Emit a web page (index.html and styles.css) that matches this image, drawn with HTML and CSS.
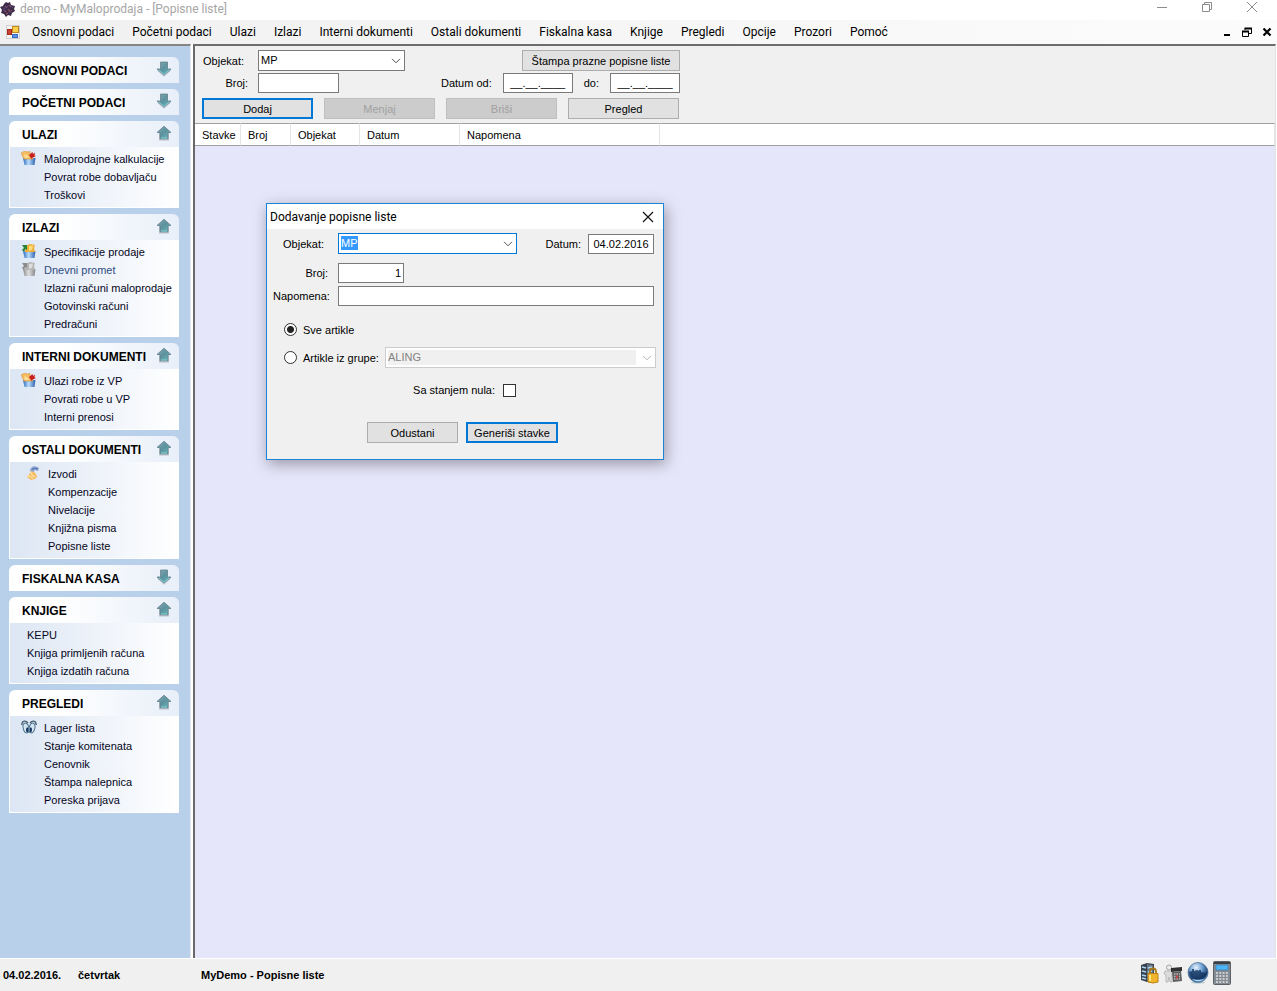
FILE: index.html
```html
<!DOCTYPE html>
<html lang="sr-Latn">
<head>
<meta charset="utf-8">
<title>demo - MyMaloprodaja - [Popisne liste]</title>
<link rel="stylesheet" href="styles.css">
</head>
<body>
<svg class="defs" width="0" height="0" aria-hidden="true">
  <defs>
    <linearGradient id="teal" x1="0" y1="0" x2="1" y2="1"><stop offset="0" stop-color="#87aab6"/><stop offset=".5" stop-color="#5b929d"/><stop offset="1" stop-color="#6fc0c4"/></linearGradient>
    <linearGradient id="cup" x1="0" y1="0" x2="1" y2="0"><stop offset="0" stop-color="#2c6cc0"/><stop offset=".45" stop-color="#b9dcf8"/><stop offset="1" stop-color="#2b60ae"/></linearGradient>
    <linearGradient id="cupgray" x1="0" y1="0" x2="1" y2="0"><stop offset="0" stop-color="#8c8c8c"/><stop offset=".45" stop-color="#dedede"/><stop offset="1" stop-color="#858585"/></linearGradient>
    <radialGradient id="globe" cx=".4" cy=".25" r=".8"><stop offset="0" stop-color="#e9f3fc"/><stop offset=".4" stop-color="#6fa0d2"/><stop offset=".75" stop-color="#1c4272"/><stop offset="1" stop-color="#7eb6e8"/></radialGradient>
    <symbol id="up" viewBox="0 0 16 16"><path d="M3 8v7.500h10V8" fill="#8b949c" opacity=".5"/><path d="M8 1.200 15 7.500H12V13.800H4V7.500H1Z" fill="url(#teal)" stroke="#64808c" stroke-width=".8"/><path d="M5 13h6" stroke="#80d0d4"/></symbol>
    <symbol id="down" viewBox="0 0 16 16"><path d="M1 9.500 8 15.800l7-6.300" fill="#8b949c" opacity=".5"/><path d="M4.500 1h7V8H15L8 14 1 8H4.500Z" fill="url(#teal)" stroke="#64808c" stroke-width=".8"/><path d="M3 9l5 4.300L13 9" fill="none" stroke="#80d0d4"/></symbol>
    <symbol id="in" viewBox="0 0 16 15"><path d="M2 7h12.500l-1 7H3.500Z" fill="url(#cup)"/><path d="M0 2 4 0l2 1 3-.5V4l3 4H3Z" fill="#f5bd62" stroke="#dc963a" stroke-width=".6"/><path d="M3 3.500l3 .5 2 3H4Z" fill="#fbe09a"/><path d="M8 4l3.500-3 .5 2 2-1.500-.5 3L15 5l-4 2-.5 1Z" fill="#c81e1c"/></symbol>
    <symbol id="out" viewBox="0 0 16 15"><path d="M2 7h12.500l-1 7H3.500Z" fill="url(#cup)"/><path d="M5 1.500 9 0l5 1-1 3 1 4H4Z" fill="#f2ad36"/><path d="M8 2l4-.5L11 6 8 7Z" fill="#fbe07a"/><path d="M1 1h5v5L4.500 5 3 7.500.8 6 3 4Z" fill="#23863a"/></symbol>
    <symbol id="outgray" viewBox="0 0 16 15"><path d="M2 7h12.500l-1 7H3.500Z" fill="url(#cupgray)"/><path d="M5 1.500 9 0l5 1-1 3 1 4H4Z" fill="#b4b4b4"/><path d="M8 2l4-.5L11 6 8 7Z" fill="#dcdcdc"/><path d="M1 1h5v5L4.500 5 3 7.500.8 6 3 4Z" fill="#8a8a8a"/></symbol>
    <symbol id="hand" viewBox="0 0 14 15"><path d="M4 5C4 1 8-1 11 1l2 1-1 3-3-1-2 3Z" fill="#8da6d2"/><path d="M6 3.500C8 2 10 2 12 3" stroke="#5878b6" stroke-width="1.200" fill="none"/><path d="M5 5 8 6l2 2 1 3-2 2-4 1-4-3 2-2Z" fill="#f7bb62"/><path d="M1 10l3 .5 3 1.500M5 6l1 3 3 2" stroke="#fde3a8" stroke-width="1.200" fill="none"/></symbol>
    <symbol id="eyes" viewBox="0 0 16 15"><path d="M.7 5C1 0 5 .5 7 3M15.300 5C15 0 11 .5 9 3" fill="none" stroke="#475d70" stroke-width="1.300"/><ellipse cx="5" cy="8" rx="2.800" ry="5" transform="rotate(-14 5 8)" fill="#d4e6f0" stroke="#496d8a"/><ellipse cx="11" cy="8" rx="2.800" ry="5" transform="rotate(14 11 8)" fill="#d4e6f0" stroke="#496d8a"/><ellipse cx="6.200" cy="9.800" rx="1.200" ry="2.500" fill="#16375f"/><ellipse cx="9.800" cy="9.800" rx="1.200" ry="2.500" fill="#16375f"/></symbol>
  </defs>
</svg>
<div class="window">
  <header class="titlebar">
    <svg width="16" height="17" viewBox="0 0 16 17"><path d="M6 1l2 1 2-1 1 3 4 1-1 3 1 2-3 2-1 3-3-1-2 2-2-3-3-1 1-3-2-3 3-1 1-2Z" fill="#3c2a48"/><path d="M5 5l2 2M9 4l2 2M4 9l2 2M8 8l2 3M11 9l1 1M6 13l2-1" stroke="#7c5060" stroke-width="1.500"/><path d="M7 5l1 1M3 8l2-1M10 12l1-1M12 6l1 1" stroke="#4b4479" stroke-width="1.500"/></svg>
    <h1 class="caption">demo - MyMaloprodaja - [Popisne liste]</h1>
    <div class="syscontrols">
      <button class="glyph" aria-label="Minimize"><svg width="12" height="12" viewBox="0 0 12 12"><path d="M1 6.500h10" stroke="#8c8c8c"/></svg></button>
      <button class="glyph" aria-label="Restore"><svg width="12" height="12" viewBox="0 0 12 12"><path d="M1.500 3.500h7v7h-7ZM3.500 3.500v-2h7v7h-2" fill="none" stroke="#8c8c8c"/></svg></button>
      <button class="glyph" aria-label="Close"><svg width="12" height="12" viewBox="0 0 12 12"><path d="M1 1l10 10M11 1 1 11" stroke="#8c8c8c"/></svg></button>
    </div>
  </header>
  <nav class="menubar">
    <svg class="appicon" width="14" height="14" viewBox="0 0 14 14"><rect x=".5" y=".5" width="13" height="13" fill="#f4f4f4" stroke="#d0d0d0"/><rect x="6.500" y="1.500" width="6" height="6" fill="#fbcf47" stroke="#bd8b24"/><rect x="1.500" y="4.500" width="4" height="5" fill="#cf4034" stroke="#a52a20"/><rect x="6.500" y="9.500" width="5" height="3" fill="#5b92ec" stroke="#3a6bbf"/></svg>
    <button class="menuitem">Osnovni podaci</button>
    <button class="menuitem">Početni podaci</button>
    <button class="menuitem">Ulazi</button>
    <button class="menuitem">Izlazi</button>
    <button class="menuitem">Interni dokumenti</button>
    <button class="menuitem">Ostali dokumenti</button>
    <button class="menuitem">Fiskalna kasa</button>
    <button class="menuitem">Knjige</button>
    <button class="menuitem">Pregledi</button>
    <button class="menuitem">Opcije</button>
    <button class="menuitem">Prozori</button>
    <button class="menuitem">Pomoć</button>
    <div class="childcontrols">
      <button class="glyph" aria-label="Minimize child"><svg width="10" height="10" viewBox="0 0 10 10"><path d="M2 8h6" stroke="#000" stroke-width="2"/></svg></button>
      <button class="glyph" aria-label="Restore child"><svg width="10" height="10" viewBox="0 0 10 10"><path d="M.5 4v5.500h6V4M3 3V1.500h6.500V6.500H7" fill="none" stroke="#000"/><path d="M0 4.500h7M2.500 1.500h7.500" stroke="#000" stroke-width="2"/></svg></button>
      <button class="glyph" aria-label="Close child"><svg width="10" height="10" viewBox="0 0 10 10"><path d="M1.500 1.500l7 7M8.500 1.500l-7 7" stroke="#000" stroke-width="2.200"/></svg></button>
    </div>
  </nav>
  <div class="workspace">
    <aside class="sidebar">
      <section class="group"><h2 class="grouphead">OSNOVNI PODACI<svg class="arrow"><use href="#down"/></svg></h2></section>
      <section class="group"><h2 class="grouphead">POČETNI PODACI<svg class="arrow"><use href="#down"/></svg></h2></section>
      <section class="group"><h2 class="grouphead">ULAZI<svg class="arrow"><use href="#up"/></svg></h2>
        <ul class="links">
          <li class="item"><svg class="icon"><use href="#in"/></svg><a href="#">Maloprodajne kalkulacije</a></li>
          <li class="item"><a href="#">Povrat robe dobavljaču</a></li>
          <li class="item"><a href="#">Troškovi</a></li>
        </ul></section>
      <section class="group"><h2 class="grouphead">IZLAZI<svg class="arrow"><use href="#up"/></svg></h2>
        <ul class="links">
          <li class="item"><svg class="icon"><use href="#out"/></svg><a href="#">Specifikacije prodaje</a></li>
          <li class="item muted"><svg class="icon"><use href="#outgray"/></svg><a href="#">Dnevni promet</a></li>
          <li class="item"><a href="#">Izlazni računi maloprodaje</a></li>
          <li class="item"><a href="#">Gotovinski računi</a></li>
          <li class="item"><a href="#">Predračuni</a></li>
        </ul></section>
      <section class="group"><h2 class="grouphead">INTERNI DOKUMENTI<svg class="arrow"><use href="#up"/></svg></h2>
        <ul class="links">
          <li class="item"><svg class="icon"><use href="#in"/></svg><a href="#">Ulazi robe iz VP</a></li>
          <li class="item"><a href="#">Povrati robe u VP</a></li>
          <li class="item"><a href="#">Interni prenosi</a></li>
        </ul></section>
      <section class="group"><h2 class="grouphead">OSTALI DOKUMENTI<svg class="arrow"><use href="#up"/></svg></h2>
        <ul class="links deep">
          <li class="item"><svg class="icon"><use href="#hand"/></svg><a href="#">Izvodi</a></li>
          <li class="item"><a href="#">Kompenzacije</a></li>
          <li class="item"><a href="#">Nivelacije</a></li>
          <li class="item"><a href="#">Knjižna pisma</a></li>
          <li class="item"><a href="#">Popisne liste</a></li>
        </ul></section>
      <section class="group"><h2 class="grouphead">FISKALNA KASA<svg class="arrow"><use href="#down"/></svg></h2></section>
      <section class="group"><h2 class="grouphead">KNJIGE<svg class="arrow"><use href="#up"/></svg></h2>
        <ul class="links shallow">
          <li class="item"><a href="#">KEPU</a></li>
          <li class="item"><a href="#">Knjiga primljenih računa</a></li>
          <li class="item"><a href="#">Knjiga izdatih računa</a></li>
        </ul></section>
      <section class="group"><h2 class="grouphead">PREGLEDI<svg class="arrow"><use href="#up"/></svg></h2>
        <ul class="links">
          <li class="item"><svg class="icon"><use href="#eyes"/></svg><a href="#">Lager lista</a></li>
          <li class="item"><a href="#">Stanje komitenata</a></li>
          <li class="item"><a href="#">Cenovnik</a></li>
          <li class="item"><a href="#">Štampa nalepnica</a></li>
          <li class="item"><a href="#">Poreska prijava</a></li>
        </ul></section>
    </aside>
    <main class="main">
      <form class="toolbar">
        <div class="row">
          <label class="label inset" for="f-obj">Objekat:</label>
          <span class="combo wide"><select id="f-obj" class="field"><option>MP</option></select><svg class="chevron" viewBox="0 0 10 6"><path d="M1 .8l4 4 4-4"/></svg></span>
          <button type="button" class="btn print">Štampa prazne popisne liste</button>
        </div>
        <div class="row second">
          <label class="label" for="f-broj">Broj:</label>
          <input id="f-broj" class="field short" type="text">
          <div class="dates">
            <label for="f-od">Datum od:</label><input id="f-od" class="field date" type="text" value="__.__.____">
            <label for="f-do">do:</label><input id="f-do" class="field date" type="text" value="__.__.____">
          </div>
        </div>
        <div class="actions">
          <button type="button" class="btn primary">Dodaj</button>
          <button type="button" class="btn" disabled>Menjaj</button>
          <button type="button" class="btn" disabled>Briši</button>
          <button type="button" class="btn">Pregled</button>
        </div>
      </form>
      <table class="grid">
        <colgroup><col class="c1"><col class="c2"><col class="c3"><col class="c4"><col class="c5"><col></colgroup>
        <thead><tr><th>Stavke</th><th>Broj</th><th>Objekat</th><th>Datum</th><th>Napomena</th><th></th></tr></thead>
      </table>
      <section class="dialog" role="dialog" aria-labelledby="dlg-title">
        <header class="dlghead"><h2 id="dlg-title" class="dlgtitle">Dodavanje popisne liste</h2>
          <button class="glyph" aria-label="Zatvori"><svg width="12" height="12" viewBox="0 0 12 12"><path d="M1 1l10 10M11 1 1 11" stroke="#111" stroke-width="1.200"/></svg></button></header>
        <form class="dlgbody">
          <div class="row">
            <label class="label inset" for="d-obj">Objekat:</label>
            <span class="combo focus"><select id="d-obj" class="field"><option>MP</option></select><svg class="chevron" viewBox="0 0 10 6"><path d="M1 .8l4 4 4-4"/></svg></span>
            <label class="datelabel" for="d-dat">Datum:</label><input id="d-dat" class="field day" type="text" value="04.02.2016">
          </div>
          <div class="row spaced"><label class="label" for="d-broj">Broj:</label><input id="d-broj" class="field day number" type="text" value="1"></div>
          <div class="row tight"><label class="label" for="d-nap">Napomena:</label><input id="d-nap" class="field grow" type="text"></div>
          <div class="choice first"><input id="r-sve" type="radio" name="izbor" class="radio" checked><label for="r-sve">Sve artikle</label></div>
          <div class="choice"><input id="r-grp" type="radio" name="izbor" class="radio"><label for="r-grp">Artikle iz grupe:</label>
            <span class="combo off"><select class="field" aria-label="Grupa" disabled><option>ALING</option></select><svg class="chevron" viewBox="0 0 10 6"><path d="M1 .8l4 4 4-4"/></svg></span></div>
          <div class="zero"><label for="c-nula">Sa stanjem nula:</label><input id="c-nula" type="checkbox" class="check"></div>
          <div class="dlgactions"><button type="button" class="btn">Odustani</button><button type="button" class="btn primary">Generiši stavke</button></div>
        </form>
      </section>
    </main>
  </div>
  <footer class="status">
    <span class="today">04.02.2016.</span><span class="weekday">četvrtak</span><span>MyDemo - Popisne liste</span>
    <div class="tray">
      <svg width="20" height="22" viewBox="0 0 20 22"><path d="M2 3 8 1l7 1v16l-7 2-6-2Z" fill="#38424e"/><path d="M8 2l6 1v15l-6 1Z" fill="#687584"/><path d="M3 5l4 1M3 9l4 1M3 13l4 1M3 16l4 1M9 6l4-1M9 10l4-1M9 14l3-1" stroke="#a8d3f1" stroke-width="1.800"/><path d="M11 12V9.500c0-4 6-4 6 0V12" fill="none" stroke="#a77913" stroke-width="1.800"/><path d="M9 11.500h10V20l-5 1-5-1Z" fill="#f0b52a" stroke="#ba8013"/><path d="M11 13v6" stroke="#ffe27b" stroke-width="2"/></svg>
      <svg width="20" height="22" viewBox="0 0 20 22"><circle cx="6" cy="5.500" r="2.500" fill="#ececec" stroke="#a4a4a4"/><path d="M2 9h7v11H7l-1-5-1 5H3v-7l-2-1Z" fill="#dcdcdc" stroke="#aaa" stroke-width=".7"/><path d="M8 6l11-1v4l-11 1Z" fill="#303030"/><path d="M9 10l9-1 1 10-9 1Z" fill="#5e5e5e"/><path d="M11 12h6M11 14.500h6M11 17h6" stroke="#bdbdbd" stroke-dasharray="1.500 1" stroke-width="1.300"/><path d="M13 13.500h2v3h-2Z" fill="#c44"/></svg>
      <svg width="22" height="22" viewBox="0 0 22 22"><ellipse cx="11" cy="20.500" rx="7" ry="1" fill="#bcc"/><circle cx="11" cy="10.500" r="10" fill="url(#globe)" stroke="#45678e" stroke-width=".7"/><path d="M2 10l3-1V7h2v2l3-1 2 1V8h2v2l6 1c-1 4-4 7-8 7C7 18 3 15 2 10Z" fill="#14335c" opacity=".8"/><path d="M5 17c4 3 8 3 12 0-3 1-9 1-12 0Z" fill="#b5e1ff"/></svg>
      <svg width="18" height="24" viewBox="0 0 18 24"><rect x=".5" y=".5" width="17" height="23" rx="1" fill="#858b92" stroke="#5b6066"/><path d="M1 2h16" stroke="#3a3f45" stroke-width="2"/><rect x="3" y="4" width="12" height="5" fill="#4db4f3" stroke="#2d78b1" stroke-width=".6"/><path d="M3 12h12M3 15h12M3 18h12M3 21h12" stroke="#e1e3e5" stroke-width="1.700" stroke-dasharray="2 1.300"/></svg>
    </div>
  </footer>
</div>
</body>
</html>
```

FILE: styles.css
```css
* { box-sizing: border-box; }
body { margin: 0; font: 11px/14px "Liberation Sans", Arial, sans-serif; color: #000; background: #fff; }
button, input, select { font: inherit; color: inherit; margin: 0; border-radius: 0; }
h1, h2, ul { margin: 0; padding: 0; font: inherit; list-style: none; }
svg { display: block; flex: none; }
.defs { position: absolute; }
.window { display: flex; flex-direction: column; height: 100vh; }

.titlebar { display: flex; align-items: center; flex: none; height: 20px; padding: 0 19px 2px 0; background: #fff; }
.caption, .menuitem, .dlgtitle { font: 12px/16px Roboto, "Noto Sans", sans-serif; }
.caption { margin-left: 4px; color: #a6a6a6; }
.syscontrols { display: flex; gap: 33px; margin-left: auto; padding-bottom: 4px; }
.glyph { display: block; padding: 0; border: 0; background: none; }
.menubar { display: flex; align-items: center; flex: none; height: 24px; padding: 0 5px 0 6px; background: linear-gradient(90deg, #f0f0f0, #fcfcfc); }
.appicon { margin-right: 12px; }
.menuitem { padding: 0; margin-right: 18px; border: 0; background: none; white-space: nowrap; }
.childcontrols { display: flex; gap: 10px; margin-left: auto; }

.workspace { display: flex; flex: 1; min-height: 0; margin-right: 1px; }
.sidebar { flex: none; display: flex; flex-direction: column; gap: 6px; width: 191px; padding: 11px 11px 0 9px; background: #b9d0ea; border-top: 2px solid #858585; border-right: 1px solid #e8e8e8; }
.grouphead { display: flex; align-items: center; justify-content: space-between; height: 26px; padding: 1px 7px 0 13px; border-radius: 6px 6px 0 0; background: linear-gradient(90deg, #fff 30%, #e8eff9); font-size: 12px; font-weight: bold; white-space: nowrap; }
.arrow { width: 16px; height: 16px; margin-bottom: 4px; }
.links { padding: 3px 0 3px 34px; border: 1px solid #fff; border-width: 0 0 1px 1px; background: linear-gradient(90deg, #dce6f4, #fff); }
.deep { padding-left: 38px; }
.shallow { padding-left: 17px; }
.item { position: relative; height: 18px; line-height: 18px; white-space: nowrap; }
.item a { color: #05051c; text-decoration: none; }
.muted a { color: #2f4c80; }
.icon { position: absolute; left: -23px; top: 1px; width: 16px; height: 15px; }

.main { position: relative; flex: 1; min-width: 0; margin-left: 2px; background: #e6e6fa; border-top: 2px solid #6d6d6d; border-left: 2px solid #696969; border-right: 1px solid #e3e3e3; }
.toolbar { padding: 4px 7px; height: 77px; background: #f0f0f0; }
.row { display: flex; align-items: center; width: 478px; }
.label { width: 46px; margin-right: 10px; text-align: right; white-space: nowrap; }
.inset { padding-right: 4px; }
.field { display: block; height: 20px; padding: 0 2px; border: 1px solid #7a7a7a; background-color: #fff; outline: 0; }
.combo { position: relative; display: block; }
.combo .field { appearance: none; width: 100%; height: 21px; padding: 0 20px 2px 2px; opacity: 1; }
.chevron { position: absolute; right: 4px; top: 8px; width: 10px; height: 6px; fill: none; stroke: #555; pointer-events: none; }
.wide { width: 147px; }
.btn { height: 21px; padding: 0 4px; border: 1px solid #adadad; background: #e1e1e1; white-space: nowrap; }
.btn:disabled { border-color: #bfbfbf; background: #ccc; color: #a0a0a0; }
.primary { border: 2px solid #0078d7; }
.print { width: 158px; margin-left: auto; }
.second { margin-top: 2px; }
.short { width: 81px; }
.dates { display: flex; align-items: center; gap: 11px; margin-left: auto; }
.date { width: 70px; text-align: center; }
.actions { display: grid; grid-template-columns: repeat(4, 111px); gap: 11px; margin-top: 5px; }

.grid { width: 100%; table-layout: fixed; border-collapse: separate; border-spacing: 0; background: #fff; }
.grid th { height: 23px; padding: 0 0 0 7px; border: solid #a0a0a0; border-width: 1px 0; border-right: 1px solid #e5e5e5; font-weight: normal; text-align: left; }
.c1 { width: 46px; }
.c2 { width: 50px; }
.c3 { width: 69px; }
.c4 { width: 100px; }
.c5 { width: 200px; }

.dialog { position: absolute; left: 71px; top: 157px; width: 398px; border: 1px solid #1883d7; background: #f0f0f0; box-shadow: 2px 4px 14px rgba(0, 0, 0, .35); }
.dlghead { display: flex; align-items: center; justify-content: space-between; height: 25px; padding: 0 9px 0 3px; background: #fff; }
.dlgbody { padding: 4px 9px 16px 6px; }
.dialog .row { width: auto; }
.dialog .label { width: 55px; }
.focus { width: 179px; }
.focus .field { border-color: #0078d7; color: #fff; background: linear-gradient(#39f, #39f) 2px 2px / 17px 14px no-repeat #fff; }
.datelabel { margin: 0 7px 0 auto; }
.day { width: 66px; text-align: center; }
.number { text-align: right; }
.spaced { margin-top: 9px; }
.tight { margin-top: 3px; }
.grow { flex: 1; }
.choice { display: flex; align-items: center; height: 21px; padding-left: 11px; margin: 7px -2px 0 0; }
.first { margin-top: 13px; }
.radio, .check { appearance: none; width: 13px; height: 13px; border: 1px solid #333; background: #fff; }
.radio { margin-right: 6px; border-radius: 50%; }
.radio:checked { background: radial-gradient(circle, #222 3px, #fff 4px); }
.off { width: 271px; margin-left: auto; }
.off .field { border-color: #ccc; color: #838383; background: linear-gradient(#f0f0f0, #f0f0f0) 2px 2px / calc(100% - 21px) 15px no-repeat #fff; }
.off .chevron { stroke: #b5b5b5; }
.zero { display: flex; align-items: center; justify-content: flex-end; gap: 8px; margin-top: 15px; padding-right: 138px; }
.dlgactions { display: grid; grid-template-columns: 91px 92px; gap: 8px; margin-top: 25px; padding-left: 94px; }

.status { display: flex; align-items: center; flex: none; height: 33px; padding: 0 46px 0 3px; border-top: 1px solid #fff; background: #f0f0f0; font-weight: bold; }
.today { width: 75px; }
.weekday { width: 123px; }
.tray { display: flex; align-items: center; gap: 4px; margin-left: auto; padding-bottom: 4px; }
```
